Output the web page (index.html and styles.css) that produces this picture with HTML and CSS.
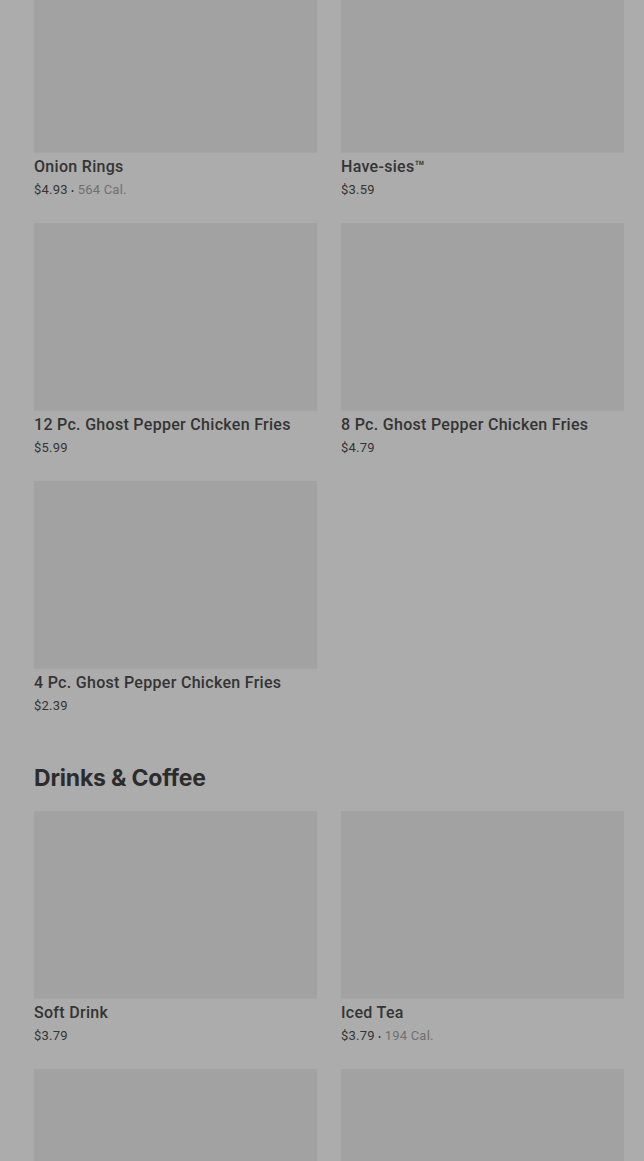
FILE: index.html
```html
<html lang="en">

<head>
    <meta charset="UTF-8">
    <meta name="viewport" content="width=device-width, initial-scale=1.0">
    <title>Menu</title>

    <link rel="stylesheet" href="styles.css">
</head>

<body>

    <div class="menu">

        <div class="grid first">
            <div class="item">
                <div class="pic"></div>
                <h3>Onion Rings</h3>
                <p>$4.93 <span class="dot">•</span> <span class="cal">564 Cal.</span></p>
            </div>
            <div class="item">
                <div class="pic"></div>
                <h3>Have-sies™</h3>
                <p>$3.59</p>
            </div>
            <div class="item">
                <div class="pic"></div>
                <h3>12 Pc. Ghost Pepper Chicken Fries</h3>
                <p>$5.99</p>
            </div>
            <div class="item">
                <div class="pic"></div>
                <h3>8 Pc. Ghost Pepper Chicken Fries</h3>
                <p>$4.79</p>
            </div>
            <div class="item">
                <div class="pic"></div>
                <h3>4 Pc. Ghost Pepper Chicken Fries</h3>
                <p>$2.39</p>
            </div>
        </div>

        <h2>Drinks &amp; Coffee</h2>

        <div class="grid">
            <div class="item">
                <div class="pic"></div>
                <h3>Soft Drink</h3>
                <p>$3.79</p>
            </div>
            <div class="item">
                <div class="pic"></div>
                <h3>Iced Tea</h3>
                <p>$3.79 <span class="dot">•</span> <span class="cal">194 Cal.</span></p>
            </div>
            <div class="item">
                <div class="pic"></div>
            </div>
            <div class="item">
                <div class="pic"></div>
            </div>
        </div>

    </div>

</body>

</html>
```

FILE: styles.css
```css
body {
    background: rgb(172, 172, 172);
    margin: 0px;
    padding: 0px;
    font-family: Roboto, "Liberation Sans", sans-serif;
    color: rgb(48, 48, 48);
    overflow: hidden;
    height: 1161px;
}
.menu {
    padding: 0 20px 0 34px;
}
.grid {
    display: grid;
    grid-template-columns: 1fr 1fr;
    column-gap: 24px;
    row-gap: 24px;
}
.first {
    margin-top: -35px;
}
.item h3 {
    margin: 4px 0 0 0;
    height: 22px;
    font-size: 16px;
    line-height: 22px;
    font-weight: 500;
    letter-spacing: 0.3px;
    white-space: nowrap;
    color: rgb(52, 52, 52);
}
.item p {
    margin: 3px 0 0 0;
    height: 18px;
    font-size: 13px;
    line-height: 18px;
    letter-spacing: 0.2px;
    color: rgb(52, 52, 52);
}
.pic {
    height: 187px;
    background: rgb(162, 162, 162);
    box-shadow: 0 1px 1px rgba(0, 0, 0, 0.04);
}
.dot {
    font-size: 9px;
}
.cal {
    color: rgb(112, 112, 112);
}
h2 {
    margin: 48px 0 18px 0;
    height: 30px;
    font-family: Inter, Roboto, sans-serif;
    font-size: 23px;
    line-height: 30px;
    font-weight: 700;
    letter-spacing: -0.2px;
    color: rgb(44, 44, 44);
}
```
